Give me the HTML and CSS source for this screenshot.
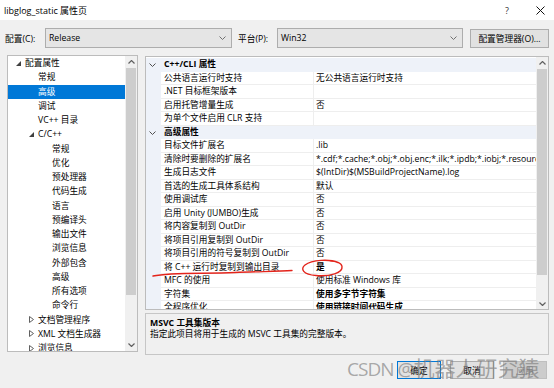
FILE: index.html
```html
<!DOCTYPE html>
<html lang="zh-CN">
<head>
<meta charset="utf-8">
<title>libglog_static 属性页</title>
<link rel="stylesheet" href="styles.css">
</head>
<body>
<div class="titlebar">
  <span class="title">libglog_static 属性页</span>
  <span class="help">?</span>
  <svg class="close" width="9" height="9" viewBox="0 0 9 9"><path d="M0.5 0.5L8.5 8.5M8.5 0.5L0.5 8.5" stroke="#111" stroke-width="1" fill="none"/></svg>
</div>

<div class="config-row">
  <span class="lbl">配置(C):</span>
  <div class="combo cfg"><span>Release</span><svg width="7" height="4" viewBox="0 0 7 4"><path d="M0.5 0.5L3.5 3.5L6.5 0.5" stroke="#707070" fill="none"/></svg></div>
  <span class="lbl lbl2">平台(P):</span>
  <div class="combo plat"><span>Win32</span><svg width="7" height="4" viewBox="0 0 7 4"><path d="M0.5 0.5L3.5 3.5L6.5 0.5" stroke="#707070" fill="none"/></svg></div>
  <button class="btn mgr">配置管理器(O)...</button>
</div>

<div class="main">
  <div class="tree">
    <div class="tree-list">
      <div class="trow l0e"><span class="arr"><svg width="5" height="5" viewBox="0 0 5 5"><path d="M5 0L5 5L0 5Z" fill="#404040"/></svg></span>配置属性</div>
      <div class="trow l1">常规</div>
      <div class="trow l1 sel">高级</div>
      <div class="trow l1">调试</div>
      <div class="trow l1">VC++ 目录</div>
      <div class="trow l1e"><span class="arr"><svg width="5" height="5" viewBox="0 0 5 5"><path d="M5 0L5 5L0 5Z" fill="#404040"/></svg></span>C/C++</div>
      <div class="trow l2">常规</div>
      <div class="trow l2">优化</div>
      <div class="trow l2">预处理器</div>
      <div class="trow l2">代码生成</div>
      <div class="trow l2">语言</div>
      <div class="trow l2">预编译头</div>
      <div class="trow l2">输出文件</div>
      <div class="trow l2">浏览信息</div>
      <div class="trow l2">外部包含</div>
      <div class="trow l2">高级</div>
      <div class="trow l2">所有选项</div>
      <div class="trow l2">命令行</div>
      <div class="trow l1e"><span class="arr"><svg width="5" height="7" viewBox="0 0 5 7"><path d="M0.5 0.5L4.5 3.5L0.5 6.5Z" fill="none" stroke="#606060"/></svg></span>文档管理程序</div>
      <div class="trow l1e"><span class="arr"><svg width="5" height="7" viewBox="0 0 5 7"><path d="M0.5 0.5L4.5 3.5L0.5 6.5Z" fill="none" stroke="#606060"/></svg></span>XML 文档生成器</div>
      <div class="trow l1e"><span class="arr"><svg width="5" height="7" viewBox="0 0 5 7"><path d="M0.5 0.5L4.5 3.5L0.5 6.5Z" fill="none" stroke="#606060"/></svg></span>浏览信息</div>
    </div>
    <div class="vscroll tree-sb">
      <div class="sb-arrow"><svg width="7" height="4" viewBox="0 0 7 4"><path d="M0.5 3.5L3.5 0.5L6.5 3.5" stroke="#606060" stroke-width="1.2" fill="none"/></svg></div>
      <div class="thumb"></div>
      <div class="sb-fill"></div>
      <div class="sb-arrow"><svg width="7" height="4" viewBox="0 0 7 4"><path d="M0.5 0.5L3.5 3.5L6.5 0.5" stroke="#606060" stroke-width="1.2" fill="none"/></svg></div>
    </div>
  </div>

  <div class="right">
    <div class="grid">
      <div class="grid-rows">
        <div class="grow cat"><span class="gut"><svg width="7" height="4" viewBox="0 0 7 4"><path d="M0.5 0.5L3.5 3.5L6.5 0.5" stroke="#505050" fill="none"/></svg></span><span class="cname">C++/CLI 属性</span></div>
        <div class="grow"><span class="gut"></span><span class="name">公共语言运行时支持</span><span class="val">无公共语言运行时支持</span></div>
        <div class="grow"><span class="gut"></span><span class="name">.NET 目标框架版本</span><span class="val"></span></div>
        <div class="grow"><span class="gut"></span><span class="name">启用托管增量生成</span><span class="val">否</span></div>
        <div class="grow"><span class="gut"></span><span class="name">为单个文件启用 CLR 支持</span><span class="val"></span></div>
        <div class="grow cat"><span class="gut"><svg width="7" height="4" viewBox="0 0 7 4"><path d="M0.5 0.5L3.5 3.5L6.5 0.5" stroke="#505050" fill="none"/></svg></span><span class="cname">高级属性</span></div>
        <div class="grow"><span class="gut"></span><span class="name">目标文件扩展名</span><span class="val">.lib</span></div>
        <div class="grow"><span class="gut"></span><span class="name">清除时要删除的扩展名</span><span class="val">*.cdf;*.cache;*.obj;*.obj.enc;*.ilk;*.ipdb;*.iobj;*.resources;*.tlb;*.tli;*.tlh</span></div>
        <div class="grow"><span class="gut"></span><span class="name">生成日志文件</span><span class="val">$(IntDir)$(MSBuildProjectName).log</span></div>
        <div class="grow"><span class="gut"></span><span class="name">首选的生成工具体系结构</span><span class="val">默认</span></div>
        <div class="grow"><span class="gut"></span><span class="name">使用调试库</span><span class="val">否</span></div>
        <div class="grow"><span class="gut"></span><span class="name">启用 Unity (JUMBO)生成</span><span class="val">否</span></div>
        <div class="grow"><span class="gut"></span><span class="name">将内容复制到 OutDir</span><span class="val">否</span></div>
        <div class="grow"><span class="gut"></span><span class="name">将项目引用复制到 OutDir</span><span class="val">否</span></div>
        <div class="grow"><span class="gut"></span><span class="name">将项目引用的符号复制到 OutDir</span><span class="val">否</span></div>
        <div class="grow"><span class="gut"></span><span class="name">将 C++ 运行时复制到输出目录</span><span class="val b">是</span></div>
        <div class="grow"><span class="gut"></span><span class="name">MFC 的使用</span><span class="val">使用标准 Windows 库</span></div>
        <div class="grow"><span class="gut"></span><span class="name">字符集</span><span class="val b">使用多字节字符集</span></div>
        <div class="grow"><span class="gut"></span><span class="name">全程序优化</span><span class="val b">使用链接时间代码生成</span></div>
      </div>
      <div class="vscroll grid-sb">
        <div class="sb-arrow"><svg width="7" height="4" viewBox="0 0 7 4"><path d="M0.5 3.5L3.5 0.5L6.5 3.5" stroke="#606060" stroke-width="1.2" fill="none"/></svg></div>
        <div class="thumb"></div>
        <div class="sb-fill"></div>
        <div class="sb-arrow"><svg width="7" height="4" viewBox="0 0 7 4"><path d="M0.5 0.5L3.5 3.5L6.5 0.5" stroke="#606060" stroke-width="1.2" fill="none"/></svg></div>
      </div>
    </div>
    <div class="desc">
      <div class="desc-title">MSVC 工具集版本</div>
      <div class="desc-text">指定此项目将用于生成的 MSVC 工具集的完整版本。</div>
    </div>
  </div>
</div>

<div class="footer">
  <button class="btn dlg default">确定</button>
  <button class="btn dlg">取消</button>
  <button class="btn dlg disabled">应用</button>
</div>

<div class="watermark"><span class="wm-latin">CSDN @</span>机器人研究猿</div>

<svg class="annot" width="554" height="388" viewBox="0 0 554 388">
  <path d="M153 276 C172 272 205 274 235 272.5 C258 271.5 278 271.5 292 270.5" stroke="#e3241b" stroke-width="1.4" fill="none" stroke-linecap="round"/>
  <path d="M338 262.5 C330 259 312 259.5 305 265 C300 269 303 274.5 316 275.5 C330 276.5 343 273 342 266.5 C341.5 263 336 261 330 261" stroke="#e3241b" stroke-width="1.4" fill="none" stroke-linecap="round"/>
</svg>
</body>
</html>
```

FILE: styles.css
```css
* { box-sizing: border-box; }
html, body { margin: 0; padding: 0; }
body {
  width: 554px;
  height: 388px;
  overflow: hidden;
  position: relative;
  background: #f0f0f0;
  color: #000;
  font-family: "Open Sans", "Noto Sans CJK SC", sans-serif;
  font-size: 8.7px;
}

/* title bar */
.titlebar {
  height: 20px;
  background: #fff;
  display: flex;
  align-items: center;
  padding-left: 4px;
}
.title { flex: 1; font-size: 9px; }
.help { width: 6px; margin-right: 25px; font-size: 9px; color: #333; }
.close { margin-right: 9px; }

/* configuration row */
.config-row {
  display: flex;
  align-items: center;
  height: 20px;
  margin-top: 8px;
  padding-left: 5px;
}
.lbl { width: 40px; }
.lbl2 { width: 39px; margin-left: 6px; }
.combo {
  height: 20px;
  background: #e5e5e5;
  border: 1px solid #adadad;
  display: flex;
  align-items: center;
  justify-content: space-between;
  padding: 0 5px 0 3px;
}
.combo.cfg { width: 187px; }
.combo.plat { width: 186px; }
.btn {
  font: inherit;
  color: #000;
  background: #e1e1e1;
  border: 1px solid #adadad;
  padding: 0;
  margin: 0;
}
.mgr { margin-left: 7px; width: 79px; height: 19px; }

/* main area */
.main {
  display: flex;
  align-items: flex-start;
  margin-top: 7px;
  padding-left: 7px;
  height: 300px;
}
.tree {
  width: 131px;
  height: 297px;
  border: 1px solid #bcbcbc;
  background: #fff;
  display: flex;
}
.tree-list { flex: 1; overflow: hidden; }
.trow {
  height: 14.25px;
  line-height: 14.25px;
  display: flex;
  align-items: center;
  white-space: nowrap;
}
.trow .arr { width: 9px; display: flex; align-items: center; }
.trow.l0e { padding-left: 8px; }
.trow.l1 { padding-left: 30px; }
.trow.l1e { padding-left: 21px; }
.trow.l2 { padding-left: 44px; }
.trow.sel { background: #0078d7; color: #fff; }

.vscroll {
  width: 12px;
  background: #f0f0f0;
  display: flex;
  flex-direction: column;
  align-items: center;
}
.sb-arrow {
  height: 12px;
  width: 100%;
  display: flex;
  align-items: center;
  justify-content: center;
}
.thumb { width: 10px; background: #cdcdcd; }
.sb-fill { flex: 1; }
.tree-sb .thumb { height: 227px; }
.grid-sb .thumb { height: 206px; }
.grid-sb .sb-arrow:last-child { height: 10px; }

.right {
  width: 404px;
  margin-left: 7px;
  margin-top: 1px;
  display: flex;
  flex-direction: column;
  gap: 3px;
}
.grid {
  height: 254px;
  border: 1px solid #bcbcbc;
  background: #fff;
  display: flex;
}
.grid-rows { flex: 1; overflow: hidden; padding-top: 1.25px; }
.grow {
  height: 13.5px;
  line-height: 12.5px;
  display: grid;
  grid-template-columns: 15px 152px 1fr;
  white-space: nowrap;
}
.gut {
  background: #eef2f9;
  display: flex;
  align-items: center;
  justify-content: center;
}
.name {
  padding-left: 3px;
  border-bottom: 1px solid #eeeeee;
  overflow: hidden;
}
.val {
  padding-left: 2px;
  border-left: 1px solid #eeeeee;
  border-bottom: 1px solid #eeeeee;
  overflow: hidden;
}
.val.b { font-weight: bold; }
.grow.cat { background: #eef2f9; }
.cname {
  grid-column: 2 / 4;
  padding-left: 3px;
  font-weight: bold;
  line-height: 13.5px;
}
.grow.cat .gut { padding-right: 3px; }

.desc {
  height: 42px;
  border: 1px solid #c6c6c6;
  background: #f0f0f0;
  padding: 3.5px 4px;
  line-height: 11px;
}
.desc-title { font-weight: bold; }

/* footer buttons */
.footer {
  display: flex;
  justify-content: flex-end;
  gap: 9px;
  padding-right: 7px;
  margin-top: 6px;
}
.btn.dlg { width: 44px; height: 18px; }
.btn.default { border-color: #0078d7; }
.btn.disabled { background: #cccccc; border-color: #bfbfbf; color: #838383; }

/* overlays */
.watermark {
  position: absolute;
  left: 347px;
  top: 356px;
  font-size: 21px;
  line-height: 24px;
  white-space: nowrap;
  color: rgba(120, 120, 120, 0.62);
}
.wm-latin { font-size: 19px; letter-spacing: -1px; }
.annot {
  position: absolute;
  left: 0;
  top: 0;
  pointer-events: none;
}
```
